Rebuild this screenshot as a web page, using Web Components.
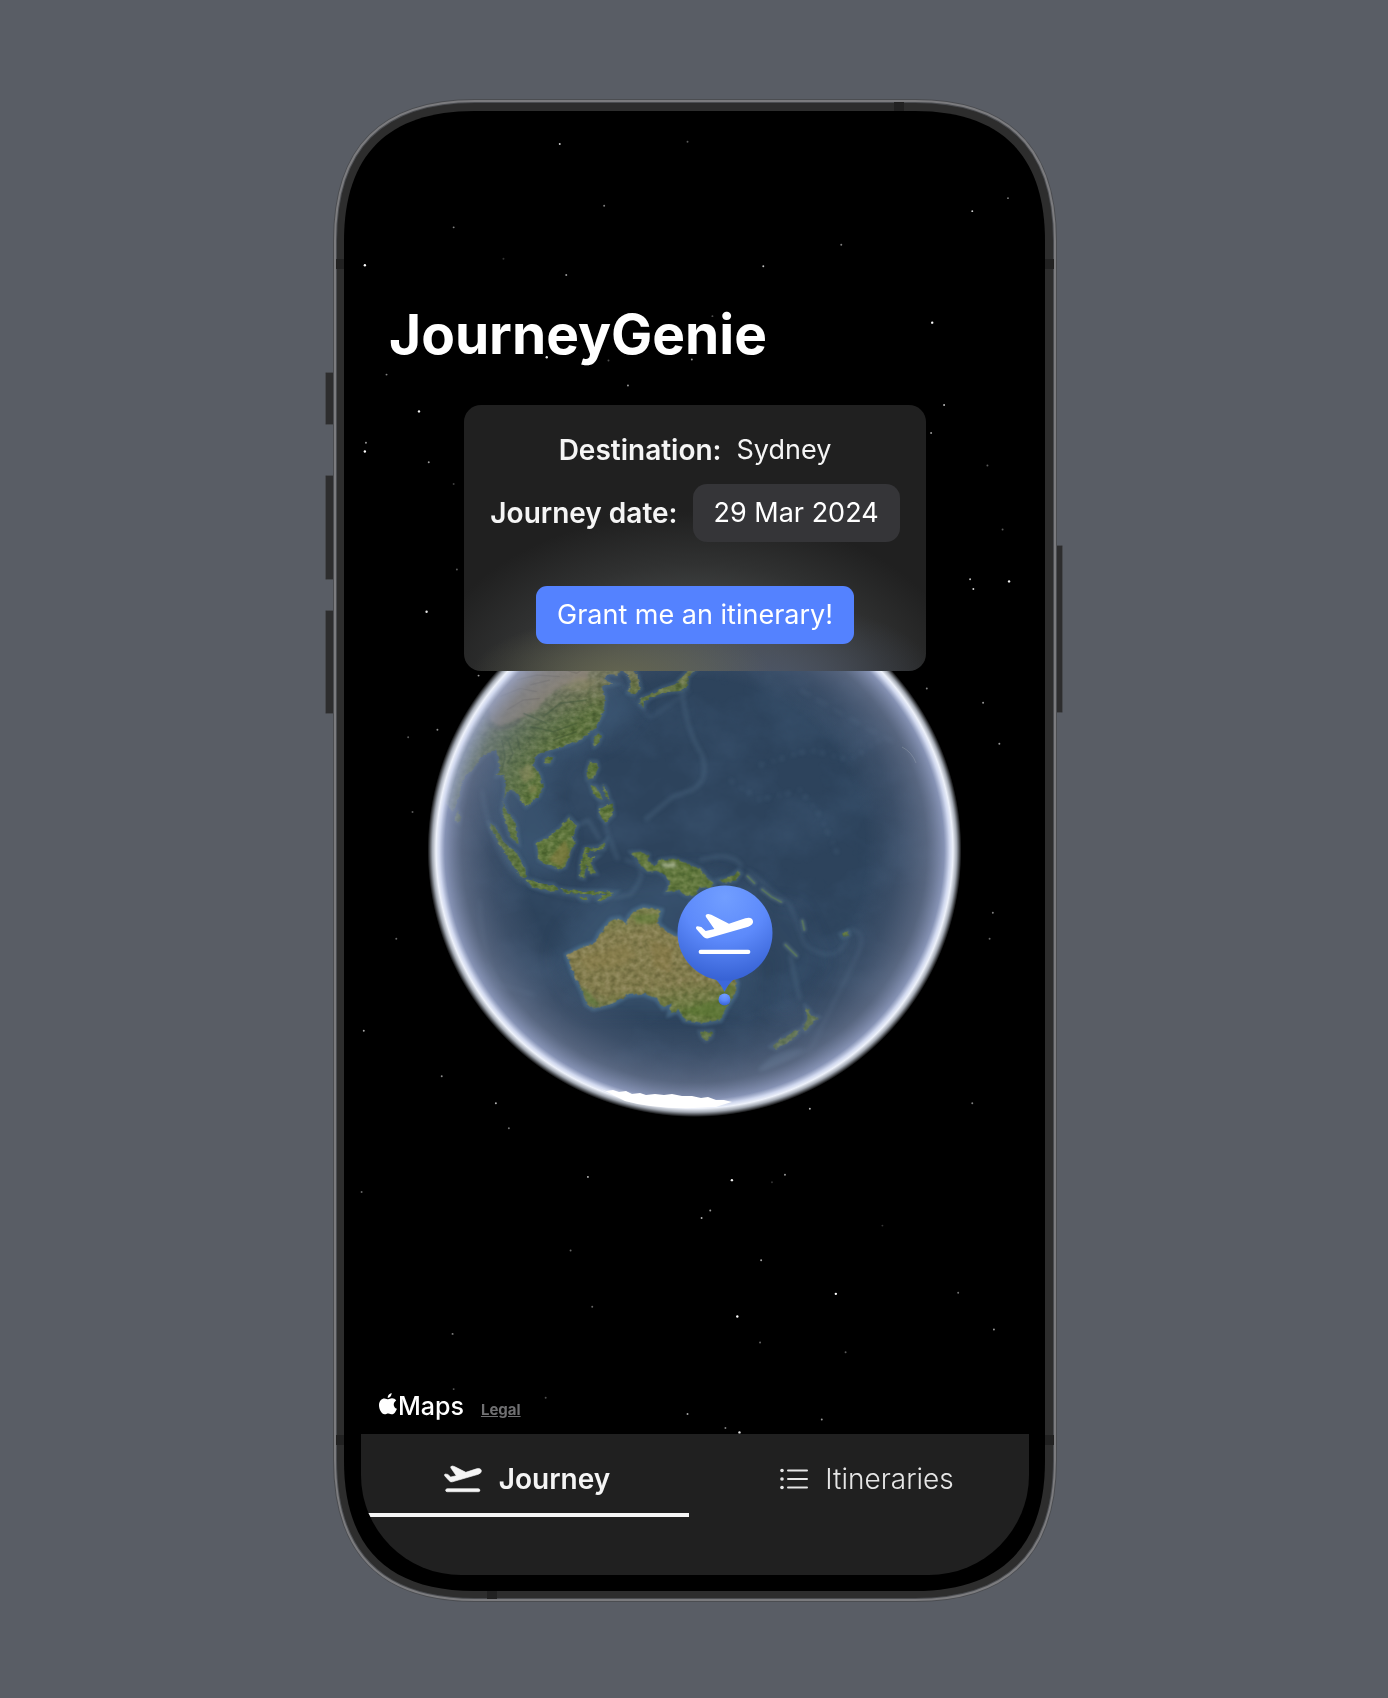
<!DOCTYPE html>
<html lang="en">
<head>
<meta charset="utf-8">
<meta name="viewport" content="width=device-width, initial-scale=1">
<title>JourneyGenie</title>
<style>
  body {
    box-sizing: border-box;
    margin: 0;
    padding-top: 4px;
    min-height: 100vh;
    display: grid;
    place-items: center;
    background: #595d65;
    color: #fff;
    font-family: Inter, "Liberation Sans", sans-serif;
  }
</style>
</head>
<body>
<phone-frame>
  <globe-map slot="backdrop"></globe-map>
  <journey-screen></journey-screen>
</phone-frame>

<script>
const define = (name, html, setup) => {
  const template = document.createElement('template');
  template.innerHTML = html;
  customElements.define(name, class extends HTMLElement {
    connectedCallback() {
      if (this.shadowRoot) return;
      const root = this.attachShadow({ mode: 'open' });
      root.append(template.content.cloneNode(true));
      if (setup) setup(root, this);
    }
  });
};

const PLANE = 'M413 319L424 321L437 333L463 327L438 291Q434 283 445 282L454 284L507 311L556 295Q575 289 579 303Q581 314 565 320L445 355Q436 357 430 350L409 327Q406 320 413 319Z';
const SHELL = 'M335 241C335 148 382 101 475 101H915C1008 101 1055 148 1055 241V1460C1055 1553 1008 1600 915 1600H475C382 1600 335 1553 335 1460Z';

/* ---------- device chassis ---------- */
define('phone-frame', `
<style>
  :host { display: grid; width: min(738px, 100%); aspect-ratio: 738 / 1502; }
  :host > *, ::slotted(*) { grid-area: 1 / 1; min-width: 0; }
  svg { display: block; width: 100%; height: 100%; overflow: visible; }
</style>
<svg viewBox="325 100 738 1502" aria-hidden="true">
  <g fill="#2d2d2e" stroke="#484a4e" stroke-width="1">
    <rect x="325.5" y="372.5" width="12" height="52" rx="1"/>
    <rect x="325.5" y="475.5" width="12" height="104" rx="1"/>
    <rect x="325.5" y="610.5" width="12" height="103" rx="1"/>
    <rect x="1050.5" y="545.5" width="12" height="167" rx="1"/>
  </g>
  <path fill="#2d2d2d" stroke="#4b4d51" stroke-width="4" d="${SHELL}"/>
  <path fill="none" stroke="#7b7b7e" stroke-width="2" d="${SHELL}"/>
  <g fill="#212121">
    <rect x="894" y="102" width="10" height="10"/><rect x="487" y="1590" width="10" height="9"/>
    <rect x="336" y="259" width="9" height="10"/><rect x="1045" y="259" width="9" height="10"/>
    <rect x="336" y="1435" width="9" height="10"/><rect x="1045" y="1435" width="9" height="10"/>
  </g>
  <path d="M344 241C344 155 388 111 474 111H915C1001 111 1045 155 1045 241V1461C1045 1547 1001 1591 915 1591H474C388 1591 344 1547 344 1461Z"/>
</svg>
<slot name="backdrop"></slot>
<slot></slot>`);

/* ---------- starry sky, globe and pin ---------- */
define('globe-map', `
<style>
  :host { display: block; }
  svg { display: block; width: 100%; height: 100%; }
</style>
<svg viewBox="325 100 738 1502" role="img" aria-label="Globe with a pin on Sydney">
  <defs>
    <radialGradient id="air" gradientUnits="userSpaceOnUse" cx="694.5" cy="850" r="267">
      <stop offset=".64" stop-color="#66708a" stop-opacity="0"/>
      <stop offset=".76" stop-color="#66708a" stop-opacity=".26"/>
      <stop offset=".87" stop-color="#757e98" stop-opacity=".58"/>
      <stop offset=".935" stop-color="#949fc2" stop-opacity=".86"/>
      <stop offset=".955" stop-color="#cfd7ee"/>
      <stop offset=".968" stop-color="#eef2fb"/>
      <stop offset=".982" stop-color="#a2a8b2"/>
      <stop offset="1" stop-color="#000"/>
    </radialGradient>
    <linearGradient id="asia" gradientUnits="userSpaceOnUse" x1="230" y1="20" x2="330" y2="420">
      <stop offset="0" stop-color="#978c6c"/><stop offset=".3" stop-color="#75784f"/>
      <stop offset=".5" stop-color="#5e7241"/><stop offset="1" stop-color="#5f763d"/>
    </linearGradient>
    <linearGradient id="oz" x1="0" y1="0" x2=".2" y2="1">
      <stop offset="0" stop-color="#737f4a"/><stop offset=".3" stop-color="#857e50"/>
      <stop offset=".75" stop-color="#827c4e"/><stop offset="1" stop-color="#677940"/>
    </linearGradient>
    <radialGradient id="balloon" cx=".5" cy=".12" r=".9">
      <stop offset="0" stop-color="#719eff"/><stop offset=".5" stop-color="#5d8afb"/><stop offset="1" stop-color="#3560d2"/>
    </radialGradient>
    <filter id="terrain" x="-5%" y="-5%" width="110%" height="110%" color-interpolation-filters="sRGB">
      <feTurbulence type="fractalNoise" baseFrequency=".06 .07" numOctaves="4" seed="8" result="n"/>
      <feDisplacementMap in="SourceGraphic" in2="n" scale="12" xChannelSelector="R" yChannelSelector="G" result="s"/>
      <feColorMatrix in="n" type="matrix" values="1.6 0 0 0 -.3  1.4 .1 0 0 -.25  1.4 0 0 0 -.22  0 0 0 0 .38" result="c"/>
      <feComposite in="c" in2="s" operator="in" result="t"/>
      <feBlend in="t" in2="s" mode="soft-light"/>
    </filter>
    <filter id="seabed" x="0" y="0" width="1" height="1" color-interpolation-filters="sRGB">
      <feTurbulence type="fractalNoise" baseFrequency=".016 .02" numOctaves="5" seed="21"/>
      <feColorMatrix type="matrix" values="0 0 0 0 .33  0 0 0 0 .45  0 0 0 0 .58  1.4 0 0 0 -.52"/>
    </filter>
    <filter id="soft" x="-20%" y="-20%" width="140%" height="140%"><feGaussianBlur stdDeviation="2"/></filter>
    <filter id="shelf" x="-20%" y="-20%" width="140%" height="140%"><feGaussianBlur stdDeviation="9"/></filter>
    <filter id="haze" x="-50%" y="-50%" width="200%" height="200%"><feGaussianBlur stdDeviation="4"/></filter>
    <clipPath id="disc"><circle cx="694.5" cy="850" r="266"/></clipPath>

    <g id="asiaLand">
      <path d="M660 -230L300 -200L60 60L0 330L98 455L112 425L130 360L155 330L190 285L228 268L240 320L230 348L252 344L256 390L247 450L258 485L270 530L295 550L289 500L278 475L262 462L250 425L258 398L272 385L285 395L305 420L318 440L355 410L368 380L360 345L340 318L343 292L365 275L395 270L430 258L480 240L525 205L550 158L555 110L545 80L582 72L552 60L566 42L592 44L604 20L612 36L626 46L632 82L624 98L645 103L662 86L655 50L640 30L700 -10L790 -120Z"/>
      <path d="M806 30L840 -40L850 -90L866 -60L846 10L803 50L800 82L780 93L738 96L692 112L672 128L670 140L660 132L664 114L690 104L730 84L768 72Z"/>
      <path d="M520 235L532 220L543 228L534 250L524 258Z"/><path d="M374 296L386 288L398 294L390 310L376 310Z"/>
      <path d="M110 450L120 468L116 488L107 482Z"/>
      <path d="M510 305L530 306L534 325L520 355L502 358L500 335Z"/>
      <path d="M512 375L526 380L540 400L548 420L530 412L518 396Z"/><path d="M548 375L560 390L568 420L556 408Z"/>
      <path d="M540 445L560 438L575 430L580 465L558 486L540 470Z"/>
      <path d="M350 550L380 535L420 505L447 472L470 495L458 530L466 545L450 575L435 620L415 628L380 612L358 600Z"/>
      <path d="M210 493L225 500L250 545L290 580L316 625L317 655L300 645L270 605L245 560L220 520Z"/>
      <path d="M318 658L340 662L370 672L400 674L416 690L380 692L335 678Z"/><path d="M425 687L465 692L510 695L560 694L578 698L540 703L480 702L430 697Z"/>
      <path d="M535 720L560 700L582 698L560 714L540 724Z"/><path d="M478 710L500 712L502 720L484 718Z"/>
      <path d="M486 590L495 565L540 560L556 545L552 566L500 576L504 592L530 590L510 606L528 640L512 640L498 612L492 655L480 652L482 610Z"/>
    </g>
    <g id="southLand">
      <path d="M215 98L240 96L265 105L262 122L285 138L300 120L340 116L385 132L425 150L440 172L462 190L450 205L420 200L400 228L378 226L355 210L320 215L332 192L318 168L290 152L262 154L238 128Z"/>
      <path d="M478 180L510 172L535 152L543 160L525 182L490 188Z"/>
      <path d="M842 342L862 334L866 344L848 352Z"/>
      <path d="M738 562L748 570L752 586L774 592L758 608L736 634L728 624L742 598Z"/><path d="M720 630L712 646L680 668L648 686L634 680L664 658L700 636Z"/>
      <path d="M420 636L456 634L454 650L438 662L426 652Z"/>
    </g>
    <g id="islets" fill="none" stroke-linecap="round">
      <path d="M562 168L584 190M606 208L634 230L664 246M727 302L733 330M676 374L690 388L710 408"/>
    </g>
    <path id="ozLand" d="M22 405L60 385L105 370L120 340L155 300L178 296L200 315L208 290L222 274L250 262L302 272L290 310L320 335L352 352L372 345L380 300L390 268L402 310L425 350L460 400L500 440L530 488L525 520L500 560L480 600L430 608L375 600L355 570L330 580L335 548L310 562L290 535L250 520L200 525L160 550L100 565L80 552L66 510L40 460Z"/>
  </defs>

  <g id="stars" transform="scale(1.0827)" fill="#fff"></g>

  <circle cx="694.5" cy="850" r="266" fill="#2d435c"/>
  <g clip-path="url(#disc)">
    <rect x="428" y="584" width="534" height="534" filter="url(#seabed)" opacity=".34"/>
    <g filter="url(#shelf)" fill="#3f5c79" opacity=".6">
      <path d="M600 660L640 705L610 738L560 760L548 800L565 830L560 880L520 870L490 820L480 760Z"/>
      <path d="M700 870L610 880L565 930L555 960L580 1010L750 1010L760 890Z" opacity=".7"/>
      <path d="M735 900L800 905L825 960L800 1010L770 1020L780 960Z" opacity=".3"/>
    </g>
    <g fill="none" stroke="#6b8ba6" filter="url(#soft)" stroke-width="3" opacity=".3">
      <path d="M682 690Q686 730 702 755Q710 780 692 790L672 797L645 820"/>
      <path d="M600 840L588 820L560 835M596 785L608 835L618 860M700 860Q735 850 742 868"/>
      <path d="M748 870L790 905L805 945Q840 970 850 930Q870 930 855 960L810 1050L760 1070" opacity=".7"/>
      <path d="M790 955L800 1000M482 790Q490 850 520 880Q570 905 630 895Q655 865 625 860"/>
      <path d="M480 900Q480 950 500 985L535 995M610 670L650 718L690 690" opacity=".6"/>
      <path d="M730 780L760 800L800 790L820 815L838 855M760 765L810 750L850 760L880 740" stroke-dasharray="4 9 2 6"/>
      <path d="M800 690L870 730L900 745" stroke-dasharray="12 7" opacity=".6"/>
    </g>
    <path d="M902 747Q912 752 916 763" fill="none" stroke="#8d9d9c" opacity=".7"/>
    <path d="M760 1068Q772 1050 806 1048Q790 1062 758 1072Z" fill="#5a7894" opacity=".45" filter="url(#soft)"/>
    <g transform="translate(420 660) scale(.3333)">
      <use href="#asiaLand" fill="none" stroke="#5b7f98" stroke-width="14" opacity=".35" filter="url(#haze)"/>
      <use href="#asiaLand" fill="url(#asia)" filter="url(#terrain)"/>
      <path d="M205 150Q220 60 300 10L520 -20L500 60L430 75L380 110L350 150L290 180L240 200Q205 190 205 150Z" fill="#a39075" opacity=".7" filter="url(#haze)"/>
      <path d="M60 130L300 -190L640 -220L760 -120L560 -20L300 10L200 130L120 250Z" fill="#a19b78" opacity=".55" filter="url(#haze)"/>
      <path d="M204 150Q198 200 235 205Q275 205 300 178" fill="none" stroke="#4a4b3c" stroke-width="8" opacity=".6" filter="url(#haze)"/>
      <g fill="none" stroke="#39502c" stroke-width="5" opacity=".45" filter="url(#soft)">
        <path d="M245 240L255 290L245 330M262 235L278 280L262 310M290 230L300 270M330 200L400 215L470 190M370 170L420 130L500 120M400 240L470 215M310 160L380 190"/>
      </g>
      <g fill="none" stroke="#74684f" stroke-width="4" opacity=".5" filter="url(#soft)">
        <path d="M240 110L300 85L350 95M260 150L310 120L360 115M290 60L350 45L420 50M330 75L390 60M400 20L470 40L500 20"/>
      </g>
      <g fill="#a79b68" opacity=".4" filter="url(#haze)"><path d="M295 330L330 310L345 350L310 370ZM325 380L350 375L350 395L330 400Z"/><path d="M420 90L470 50L530 60L500 90Z"/></g>
      <path d="M385 600L435 540L450 580L425 622Z" fill="#8d7d40" opacity=".5" filter="url(#haze)"/>
    </g>
    <g transform="translate(560 820) scale(.3333)">
      <use href="#southLand" fill="none" stroke="#5b7f98" stroke-width="14" opacity=".35" filter="url(#haze)"/>
      <use href="#ozLand" fill="none" stroke="#5b86a4" stroke-width="18" opacity=".45" filter="url(#haze)"/>
      <use href="#islets" stroke="#6f8a93" stroke-width="12" opacity=".5" filter="url(#haze)"/>
      <use href="#islets" stroke="#5c7a58" stroke-width="4"/>
      <use href="#southLand" fill="#61773e" filter="url(#terrain)"/>
      <use href="#ozLand" fill="url(#oz)" filter="url(#terrain)"/>
      <g filter="url(#haze)" opacity=".5">
        <path d="M60 495L85 550L120 560L90 520Z" fill="#4f7a2c"/>
        <path d="M215 285L300 280L285 310L230 310Z" fill="#5c7c35"/>
        <path d="M360 575L480 598L528 500L500 480L470 540L400 560Z" fill="#56752f"/>
        <path d="M60 410L200 370L230 410L180 440L80 450Z" fill="#8f814b" opacity=".6"/>
        <path d="M270 360L340 380L330 460L280 440Z" fill="#8c7846" opacity=".6"/>
        <path d="M300 130L345 128L350 142L310 142Z" fill="#d8dbcf"/>
      </g>
    </g>
  </g>
  <circle cx="694.5" cy="850" r="267" fill="url(#air)"/>
  <path d="M601 1089L606 1091L613 1090L619 1092L626 1091L632 1094L640 1093L646 1095L655 1094L664 1095L672 1094L682 1096L692 1096L701 1098L708 1097L716 1100L724 1100L732 1102L722 1105L716 1107Q660 1111 625 1101Z" fill="#fff"/>

  <path d="M698 968Q718 977 724.500 992Q731 977 752 968Z" fill="#3c68dd"/>
  <circle cx="725" cy="933" r="47.5" fill="url(#balloon)"/>
  <circle cx="724.5" cy="999.5" r="6" fill="url(#balloon)"/>
  <g transform="translate(560 820) scale(.3333)" fill="#fff"><path d="${PLANE}"/><rect x="416" y="389" width="155" height="13" rx="6"/></g>
</svg>`, root => {
  /* x, y, brightness (percent) */
  const stars = [[517,133,80],[635,131,35],[558,190,50],[419,210,50],[898,195,80],[931,183,45],[777,226,50],
    [337,245,100],[465,239,20],[523,254,60],[705,246,75],[861,298,100],[658,292,30],[505,330,90],[562,333,30],
    [639,332,60],[357,346,50],[580,356,60],[387,380,95],[872,374,75],[338,409,60],[337,417,100],[396,427,60],
    [860,400,60],[912,430,35],[419,447,25],[926,489,35],[422,526,35],[896,535,75],[899,544,85],[932,537,95],
    [394,565,90],[442,624,60],[856,636,50],[908,649,60],[923,687,60],[404,674,55],[377,681,35],[381,750,35],
    [917,843,50],[914,867,40],[366,867,40],[336,952,65],[408,994,55],[458,1019,70],[470,1042,45],[748,1024,70],
    [898,1019,50],[334,1101,40],[543,1087,75],[676,1090,95],[713,1092,20],[725,1085,60],[656,1118,60],[648,1125,70],
    [815,1132,20],[527,1155,40],[703,1164,65],[772,1195,100],[885,1194,45],[547,1207,40],[681,1216,100],[918,1228,60],
    [418,1232,50],[702,1240,40],[781,1249,35],[419,1283,35],[504,1291,30],[635,1306,65],[759,1311,60],[670,1319,50],[683,1323,90]];
  root.getElementById('stars').innerHTML = stars.map(([x, y, o]) =>
    '<circle cx="' + x + '" cy="' + y + '" r="' + (o > 85 ? 1.1 : .9) + '" opacity="' + o / 100 + '"/>').join('');
});

/* ---------- app screen ---------- */
define('journey-screen', `
<style>
  :host { display: flex; flex-direction: column; padding: 200px 34px 27px 36px; box-sizing: border-box; }
  h1 { margin: 0 28px 37px; font-size: 55px; line-height: 68px; font-weight: 700; }
  journey-card { align-self: center; }
  footer { margin: auto 18px 0; padding-bottom: 12px; display: flex; align-items: baseline; gap: 17px; }
  .brand { display: flex; align-items: baseline; gap: 1px; font-size: 25px; line-height: 32px; font-weight: 500; }
  .brand svg { width: 18px; height: 22px; }
  a { color: #707072; font-size: 15px; line-height: 20px; font-weight: 700; }
</style>
<h1>JourneyGenie</h1>
<journey-card></journey-card>
<footer>
  <span class="brand"><svg viewBox="0 0 18 22" fill="#fff" aria-hidden="true"><path d="M12.600 0C12.800 2.600 10.800 4.900 8.700 5C8.500 2.700 10.400 .5 12.600 0ZM9.200 6.200C10.300 6.200 11.300 5.200 13 5.200C14.700 5.200 16.300 6 17.200 7.400C13.600 9.500 14.100 14.300 17.900 15.700C17.100 18 15.200 21.200 13.200 21.300C11.800 21.400 11.200 20.500 9.400 20.500C7.600 20.500 7 21.300 5.700 21.300C2.800 21.400 0 16.500 0 12.300C0 8 2.700 5.400 5.400 5.400C7 5.400 8.200 6.200 9.200 6.200Z"/></svg><span>Maps</span></span>
  <a href="#legal">Legal</a>
</footer>
<tab-bar>
  <tab-item current>
    <svg slot="icon" width="38" height="28" viewBox="406 280 176 124" fill="currentColor" stroke="currentColor" stroke-width="3" aria-hidden="true"><path d="${PLANE}"/><rect x="414" y="387" width="158" height="14" rx="7"/></svg>
    Journey
  </tab-item>
  <tab-item>
    <svg slot="icon" width="28" height="22" viewBox="0 0 28 22" fill="currentColor" aria-hidden="true"><circle cx="2" cy="2.500" r="1.800"/><circle cx="2" cy="11" r="1.800"/><circle cx="2" cy="19.500" r="1.800"/><path d="M8 2.500H27M8 11H27M8 19.500H27" stroke="currentColor" stroke-width="2" stroke-linecap="round"/></svg>
    Itineraries
  </tab-item>
</tab-bar>`);

define('journey-card', `
<style>
  :host {
    display: flex; flex-direction: column; align-items: center;
    box-sizing: border-box; width: 462px; max-width: 100%; padding: 28px 16px 27px;
    border-radius: 17px;
    background:
      radial-gradient(150px 60px at 34% 102%, rgba(104, 105, 80, .85), rgba(104, 105, 80, 0)),
      radial-gradient(170px 80px at 66% 104%, rgba(76, 86, 106, .85), rgba(76, 86, 106, 0)),
      radial-gradient(270px 170px at 50% 104%, #565a5a, #494c4c 35%, #303131 70%, #202020);
    line-height: 34px; color: #f5f5f5;
  }
  .row { display: flex; align-items: center; gap: 15px; white-space: nowrap; }
  .label { font-size: 28px; font-weight: 600; }
  .date { margin: 17px 0 44px; }
  output, button { font-size: 27px; font-weight: 400; }
  button { border: 0; margin: 0; font-family: inherit; line-height: inherit; color: #fff; padding: 12px 21px; white-space: nowrap; }
  #date { background: #353538; border-radius: 14px; }
  .go { background: #5482ff; border-radius: 11px; }
</style>
<div class="row"><label class="label" for="place">Destination:</label><output id="place">Sydney</output></div>
<div class="row date"><label class="label" for="date">Journey date:</label><button id="date" type="button">29 Mar 2024</button></div>
<button class="go" type="button">Grant me an itinerary!</button>`);

define('tab-bar', `
<style>
  :host { display: flex; height: 141px; align-items: flex-start; overflow: hidden; background: #202020; border-radius: 0 0 100px 100px; }
  nav { display: flex; flex: 1; }
</style>
<nav aria-label="Sections"><slot></slot></nav>`);

define('tab-item', `
<style>
  :host { display: block; flex: 1; }
  button {
    display: flex; width: 100%; height: 83px; align-items: center; justify-content: center; gap: 17px;
    margin: 0; padding: 10px 12px 0 22px; border: 0; border-bottom: 4px solid transparent; background: none;
    color: #e6e6e6; font: inherit; font-size: 28px; line-height: 34px; font-weight: 300;
  }
  :host([current]) button { color: #f5f5f5; font-weight: 600; border-bottom-color: #f5f5f5; }
  :host([current]) { margin-right: 6px; margin-left: -6px; }
</style>
<button type="button"><slot name="icon"></slot><span><slot></slot></span></button>`);
</script>
</body>
</html>
